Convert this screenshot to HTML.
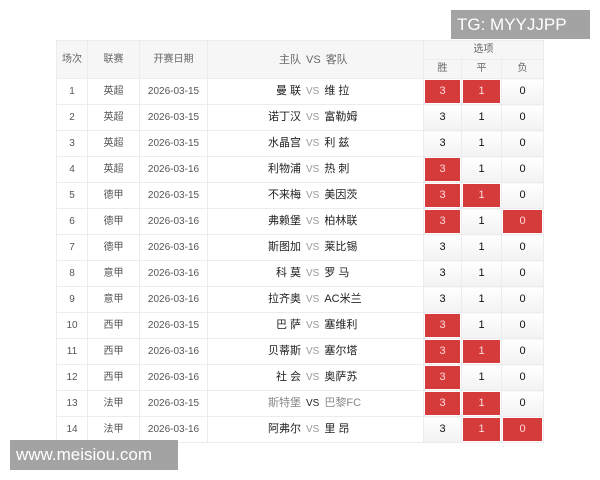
<!DOCTYPE html>
<html><head><meta charset="utf-8"><style>
body{margin:0;width:600px;height:480px;background:#fff;position:relative;overflow:hidden;font-family:"Liberation Sans","Noto Sans CJK SC",sans-serif;}
table{position:absolute;left:56px;top:40px;border-collapse:collapse;table-layout:fixed;width:487px;font-size:10px;color:#555;}
td,th{border:1px solid #ececec;text-align:center;padding:0;font-weight:normal;vertical-align:middle;overflow:hidden;white-space:nowrap}
th{background:#f6f6f6;color:#666;height:18px;line-height:18px}
tbody td{height:25px;line-height:25px;}
td.t{text-align:left;color:#222;font-size:11px}
td.t .h{display:inline-block;width:93px;text-align:right}
td.t .v{color:#999;margin:0 5px;font-size:10px}
td.o{color:#111;font-size:11px;background:linear-gradient(#fff,#f2f2f2)}
td.r{background:#d63b3b;color:#fbdada;box-shadow:inset 0 0 0 1px #fff}
.wm{position:absolute;background:#a3a3a3;color:#fff;font-size:17px;line-height:29px;padding-left:6px}
</style></head><body>
<table>
<colgroup><col style="width:31px"><col style="width:52px"><col style="width:68px"><col style="width:216px"><col style="width:38px"><col style="width:40px"><col style="width:42px"></colgroup>
<thead>
<tr><th rowspan="2">场次</th><th rowspan="2">联赛</th><th rowspan="2">开赛日期</th><th rowspan="2" style="text-align:left;font-size:11px"><span style="display:inline-block;width:93px;text-align:right">主队</span><span style="margin:0 5px">VS</span>客队</th><th colspan="3">选项</th></tr>
<tr><th>胜</th><th>平</th><th>负</th></tr>
</thead>
<tbody>
<tr><td>1</td><td>英超</td><td>2026-03-15</td><td class="t"><span class="h">曼 联</span><span class="v">VS</span>维 拉</td><td class="o r">3</td><td class="o r">1</td><td class="o">0</td></tr>
<tr><td>2</td><td>英超</td><td>2026-03-15</td><td class="t"><span class="h">诺丁汉</span><span class="v">VS</span>富勒姆</td><td class="o">3</td><td class="o">1</td><td class="o">0</td></tr>
<tr><td>3</td><td>英超</td><td>2026-03-15</td><td class="t"><span class="h">水晶宫</span><span class="v">VS</span>利 兹</td><td class="o">3</td><td class="o">1</td><td class="o">0</td></tr>
<tr><td>4</td><td>英超</td><td>2026-03-16</td><td class="t"><span class="h">利物浦</span><span class="v">VS</span>热 刺</td><td class="o r">3</td><td class="o">1</td><td class="o">0</td></tr>
<tr><td>5</td><td>德甲</td><td>2026-03-15</td><td class="t"><span class="h">不来梅</span><span class="v">VS</span>美因茨</td><td class="o r">3</td><td class="o r">1</td><td class="o">0</td></tr>
<tr><td>6</td><td>德甲</td><td>2026-03-16</td><td class="t"><span class="h">弗赖堡</span><span class="v">VS</span>柏林联</td><td class="o r">3</td><td class="o">1</td><td class="o r">0</td></tr>
<tr><td>7</td><td>德甲</td><td>2026-03-16</td><td class="t"><span class="h">斯图加</span><span class="v">VS</span>莱比锡</td><td class="o">3</td><td class="o">1</td><td class="o">0</td></tr>
<tr><td>8</td><td>意甲</td><td>2026-03-16</td><td class="t"><span class="h">科 莫</span><span class="v">VS</span>罗 马</td><td class="o">3</td><td class="o">1</td><td class="o">0</td></tr>
<tr><td>9</td><td>意甲</td><td>2026-03-16</td><td class="t"><span class="h">拉齐奥</span><span class="v">VS</span>AC米兰</td><td class="o">3</td><td class="o">1</td><td class="o">0</td></tr>
<tr><td>10</td><td>西甲</td><td>2026-03-15</td><td class="t"><span class="h">巴 萨</span><span class="v">VS</span>塞维利</td><td class="o r">3</td><td class="o">1</td><td class="o">0</td></tr>
<tr><td>11</td><td>西甲</td><td>2026-03-16</td><td class="t"><span class="h">贝蒂斯</span><span class="v">VS</span>塞尔塔</td><td class="o r">3</td><td class="o r">1</td><td class="o">0</td></tr>
<tr><td>12</td><td>西甲</td><td>2026-03-16</td><td class="t"><span class="h">社 会</span><span class="v">VS</span>奥萨苏</td><td class="o r">3</td><td class="o">1</td><td class="o">0</td></tr>
<tr><td>13</td><td>法甲</td><td>2026-03-15</td><td class="t" style="color:#888"><span class="h">斯特堡</span><span class="v" style="color:#222">VS</span>巴黎FC</td><td class="o r">3</td><td class="o r">1</td><td class="o">0</td></tr>
<tr><td>14</td><td>法甲</td><td>2026-03-16</td><td class="t"><span class="h">阿弗尔</span><span class="v">VS</span>里 昂</td><td class="o">3</td><td class="o r">1</td><td class="o r">0</td></tr>
</tbody>
</table>
<div class="wm" style="left:451px;top:10px;width:133px;height:29px">TG: MYYJJPP</div>
<div class="wm" style="left:10px;top:440px;width:162px;height:30px;line-height:30px">www.meisiou.com</div>
</body></html>
